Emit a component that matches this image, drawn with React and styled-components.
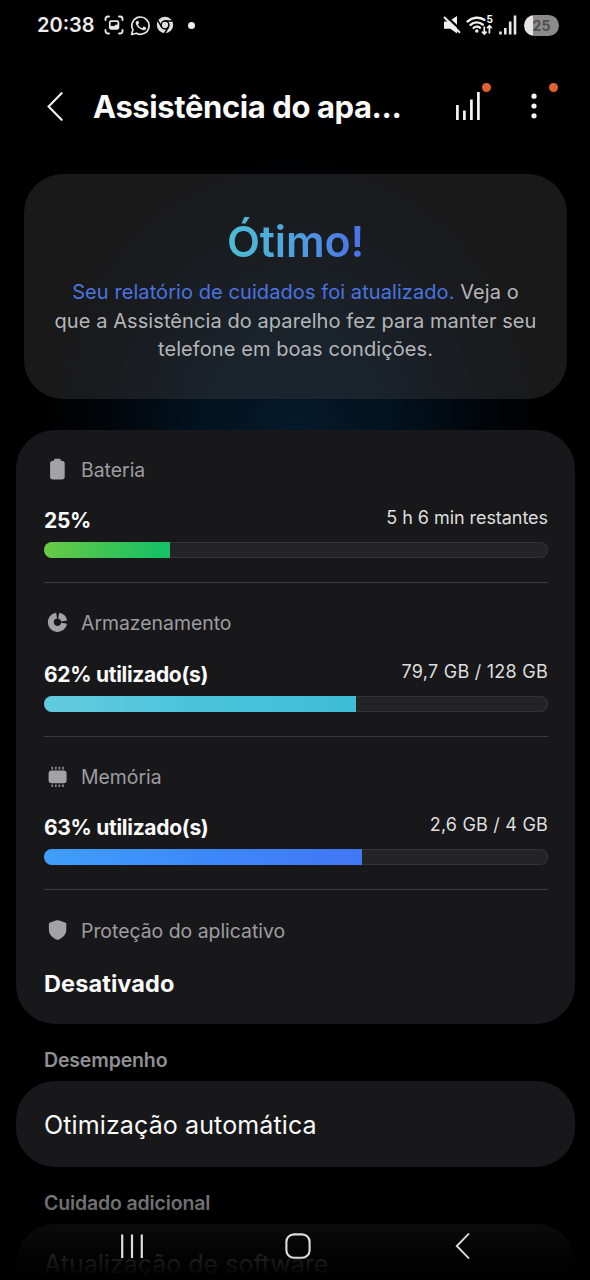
import React from 'react';
import styled, { createGlobalStyle } from 'styled-components';

const metrics = [
  {
    id: 'battery',
    label: 'Bateria',
    value: '25%',
    detail: '5 h 6 min restantes',
    tracking: '-0.05px',
    percent: 25,
    fill: 'linear-gradient(100deg, #6acb45 0%, #3cc455 50%, #12c169 100%)',
  },
  {
    id: 'storage',
    label: 'Armazenamento',
    value: '62% utilizado(s)',
    detail: '79,7 GB / 128 GB',
    tracking: '0.25px',
    percent: 62,
    fill: 'linear-gradient(90deg, #62cbe0, #4ac3da 50%, #3fbdd6)',
  },
  {
    id: 'memory',
    label: 'Memória',
    value: '63% utilizado(s)',
    detail: '2,6 GB / 4 GB',
    tracking: '0.2px',
    percent: 63,
    fill: 'linear-gradient(90deg, #3f9ffa, #3d86fb 55%, #4277f5)',
  },
];

const BatteryIcon = () => (
  <svg width="26" height="26" viewBox="0 0 26 26" fill="#a3a3a7">
    <path d="M10 3.300c0-.9.6-1.500 1.500-1.500h3.800c.9 0 1.500.6 1.500 1.500v.5h1.200c1.600 0 2.700 1.100 2.700 2.700v13.300c0 1.700-1.100 2.800-2.700 2.800H8.800c-1.600 0-2.700-1.100-2.700-2.800V6.500c0-1.600 1.100-2.700 2.700-2.700H10z" />
  </svg>
);

const StorageIcon = () => (
  <svg width="26" height="26" viewBox="0 0 26 26" fill="none" stroke="#a3a3a7" strokeWidth="6">
    <path d="M12.600 5.600a6.700 6.700 0 1 0 7.500 7.700" />
    <path d="M14.700 5.600a6.700 6.700 0 0 1 5.400 5.500" />
  </svg>
);

const MemoryIcon = () => (
  <svg width="26" height="26" viewBox="0 0 26 26" fill="#a3a3a7">
    <rect x="4.600" y="6.600" width="18" height="12.600" rx="3" />
    <path
      d="M8.200 2.800v2.600M11.800 2.800v2.600M15.400 2.800v2.600M19 2.800v2.600M8.200 20.400V23M11.800 20.400V23M15.400 20.400V23M19 20.400V23"
      stroke="#8a8a8e"
      strokeWidth="1.700"
    />
  </svg>
);

const ShieldIcon = () => (
  <svg width="26" height="26" viewBox="0 0 26 26" fill="#a3a3a7">
    <path d="M12.700 2.300a2.600 2.600 0 0 1 1.800 0l6.500 2.100c.8.300 1.300.8 1.300 1.600v5.500c0 5-3.300 8.100-7.400 10a3 3 0 0 1-2.600 0c-4.100-1.900-7.400-5-7.400-10V6c0-.8.5-1.300 1.300-1.600z" />
  </svg>
);

const metricIcons = {
  battery: <BatteryIcon />,
  storage: <StorageIcon />,
  memory: <MemoryIcon />,
};

const CaptureIcon = () => (
  <svg width="20" height="20" viewBox="0 0 20 20" fill="none" stroke="#e6e6e6" strokeWidth="1.900" strokeLinecap="round">
    <path d="M1.500 5V4a2.500 2.500 0 0 1 2.500-2.500h1M15 1.500h1A2.500 2.500 0 0 1 18.500 4v1M18.500 15v1a2.500 2.500 0 0 1-2.500 2.500h-1M5 18.500H4A2.500 2.500 0 0 1 1.500 16v-1" />
    <rect x="5.800" y="6.200" width="8.600" height="7.600" rx="1.200" strokeWidth="1.800" />
    <path d="M6 13.500V11.600l2-.9 2 .6 2-1.900 2.400.4v3.700z" fill="#e6e6e6" stroke="none" />
  </svg>
);

const WhatsappIcon = () => (
  <svg width="21" height="21" viewBox="0 0 21 21" fill="none" stroke="#e6e6e6" strokeWidth="1.700" strokeLinejoin="round">
    <path d="M1.600 19.500l1.300-4.800a8.600 8.600 0 1 1 3.500 3.500z" />
    <path
      d="M7.600 5.700c.4 0 .6.1.8.6l.6 1.500c.1.300 0 .6-.8 1.500-.2.200-.1.400 0 .6.9 1.500 2 2.400 3.600 3.100.3.100.5.100.7-.1l.9-1.100c.2-.3.400-.3.700-.2l1.700.8c.4.200.5.300.4.900-.2 1.200-1.400 2-2.500 1.900-3.700-.4-7.400-3.800-8-6.900-.2-1.200.9-2.600 1.900-2.600z"
      fill="#e6e6e6"
      stroke="none"
    />
  </svg>
);

const ChromeIcon = () => (
  <svg width="18" height="18" viewBox="0 0 18 18">
    <circle cx="9" cy="9" r="8.200" fill="#dedede" />
    <circle cx="9" cy="9" r="3.900" fill="#dedede" stroke="#000" strokeWidth="1.500" />
    <path d="M9 5.100h7.600M5.600 11L1.800 4.400M12.400 11L8.600 17.500" stroke="#000" strokeWidth="1.500" />
  </svg>
);

const MuteIcon = () => (
  <svg width="18" height="20" viewBox="0 0 18 20">
    <path d="M1 6.400h4.600L14 1v17.600l-6.600-4.900H1z" fill="#efefef" />
    <path d="M2.800 .6L19 16.200" stroke="#000" strokeWidth="2.200" />
    <path d="M1 2L17 17.700" stroke="#efefef" strokeWidth="2" />
  </svg>
);

const WifiIcon = () => (
  <svg width="28" height="22" viewBox="0 0 28 22" fill="none" stroke="#efefef" strokeLinecap="round">
    <path d="M1.700 7.400a13.500 13.500 0 0 1 16.600-1.600" strokeWidth="2.500" />
    <path d="M4.600 10.900a9 9 0 0 1 12.200-.3" strokeWidth="2.400" />
    <path d="M7.500 14a5 5 0 0 1 6.600-.1" strokeWidth="2.200" />
    <circle cx="10.800" cy="17" r="1.700" fill="#efefef" stroke="none" />
    <path d="M18.300 12.500v7M16 17.600l2.300 2.400 2.300-2.400M23.400 19.500v-7M21.100 14.200l2.300-2.400 2.300 2.400" strokeWidth="1.700" strokeLinecap="butt" />
  </svg>
);

const SignalIcon = () => (
  <svg width="18" height="22" viewBox="0 0 18 22" stroke="#e8e8e8" strokeWidth="2.600">
    <path d="M1.500 17.500V20.500M6.300 14V20.500M11.200 7.500V20.500M16 1.500V20.500" />
  </svg>
);

const BackIcon = ({ width, height, stroke }) => (
  <svg width={width} height={height} viewBox="0 0 16 29" fill="none" stroke={stroke} strokeWidth="2.100" strokeLinecap="round">
    <path d="M14.600 1.200L1.600 14.500l13 13.300" />
  </svg>
);

const ReportIcon = () => (
  <svg width="26" height="30" viewBox="0 0 26 30" stroke="#f4f4f4" strokeWidth="2.700">
    <path d="M2.400 14V29M9.400 19.500V29M16.400 8.500V29M23.400 1V29" />
  </svg>
);

const MoreIcon = () => (
  <svg width="6" height="26" viewBox="0 0 6 26" fill="#f4f4f4">
    <circle cx="3" cy="3.200" r="2.600" />
    <circle cx="3" cy="13" r="2.600" />
    <circle cx="3" cy="22.800" r="2.600" />
  </svg>
);

const App = () => {
  return (
    <Screen>
      <GlobalStyle />
      <StatusBar>
        <StatusGroup>
          <Clock>20:38</Clock>
          <CaptureIcon />
          <WhatsappIcon />
          <ChromeIcon />
          <StatusDot />
        </StatusGroup>
        <StatusGroup $right>
          <MuteIcon />
          <Wifi>
            <WifiIcon />
            <WifiBand>5</WifiBand>
          </Wifi>
          <SignalIcon />
          <BatteryPill>25</BatteryPill>
        </StatusGroup>
      </StatusBar>

      <Header>
        <IconButton>
          <BackIcon width="16" height="29" stroke="#f4f4f4" />
        </IconButton>
        <Title>Assistência do apa...</Title>
        <Actions>
          <IconButton>
            <ReportIcon />
            <Badge $x="27px" $y="-8px" />
          </IconButton>
          <IconButton>
            <MoreIcon />
            <Badge $x="18px" $y="-10px" />
          </IconButton>
        </Actions>
      </Header>

      <Content>
        <Hero>
          <HeroTitle>Ótimo!</HeroTitle>
          <HeroText>
            <HeroLink>Seu relatório de cuidados foi atualizado.</HeroLink> Veja o<br />
            que a Assistência do aparelho fez para manter seu<br />
            telefone em boas condições.
          </HeroText>
        </Hero>

        <Card>
          {metrics.map((m) => (
            <Metric key={m.id}>
              <Label>
                {metricIcons[m.id]}
                {m.label}
              </Label>
              <Values>
                <Value>{m.value}</Value>
                <Detail $tracking={m.tracking}>{m.detail}</Detail>
              </Values>
              <Track>
                <Fill $fill={m.fill} style={{ width: `${m.percent}%` }} />
              </Track>
            </Metric>
          ))}
          <Protection>
            <Label>
              <ShieldIcon />
              Proteção do aplicativo
            </Label>
            <ProtectionState>Desativado</ProtectionState>
          </Protection>
        </Card>

        <SectionTitle>Desempenho</SectionTitle>
        <ListItem>Otimização automática</ListItem>
        <SectionTitle>Cuidado adicional</SectionTitle>
        <ListItem $last>Atualização de software</ListItem>
      </Content>

      <NavBar>
        <NavButton>
          <svg width="24" height="26" viewBox="0 0 24 26" stroke="#dcdcdc" strokeWidth="2.200">
            <path d="M2.200 1.500V25M12 1.500V25M21.800 1.500V25" />
          </svg>
        </NavButton>
        <NavButton>
          <svg width="26" height="26" viewBox="0 0 26 26" fill="none" stroke="#dcdcdc" strokeWidth="2.100">
            <rect x="1.400" y="1.400" width="23.200" height="23.400" rx="7.500" />
          </svg>
        </NavButton>
        <NavButton>
          <BackIcon width="15" height="26" stroke="#dcdcdc" />
        </NavButton>
      </NavBar>
    </Screen>
  );
};

const GlobalStyle = createGlobalStyle`
  * {
    box-sizing: border-box;
  }

  body {
    margin: 0;
    background: #000;
  }

  svg {
    display: block;
    flex-shrink: 0;
  }
`;

const Screen = styled.div`
  position: relative;
  width: 590px;
  height: 1280px;
  overflow: hidden;
  background: radial-gradient(ellipse 245px 270px at 295px 425px, #04192a 0%, #03121f 40%, #01060b 75%, #000 100%);
  color: #fff;
  font-family: Inter, 'Liberation Sans', sans-serif;
`;

const StatusBar = styled.div`
  display: flex;
  justify-content: space-between;
  align-items: center;
  height: 50px;
  padding: 0 31px 0 37px;
`;

const StatusGroup = styled.div`
  display: flex;
  align-items: center;
  gap: ${(props) => (props.$right ? '5px' : '5.500px')};
`;

const Clock = styled.span`
  width: 61.5px;
  font-size: 20px;
  font-weight: 600;
  color: #ececec;
`;

const StatusDot = styled.span`
  width: 7px;
  height: 7px;
  margin-left: 8px;
  border-radius: 50%;
  background: #efefef;
`;

const Wifi = styled.span`
  position: relative;
`;

const WifiBand = styled.span`
  position: absolute;
  top: 0;
  right: 1px;
  font-size: 10px;
  font-weight: 700;
  line-height: 10px;
`;

const BatteryPill = styled.span`
  display: flex;
  align-items: center;
  justify-content: center;
  width: 35px;
  height: 21px;
  margin-left: 2px;
  border-radius: 11px;
  background: linear-gradient(90deg, #e4e4e4 25%, #8b8b8b 25%);
  color: #4f4f4f;
  font-size: 14px;
  font-weight: 700;
`;

const Header = styled.header`
  display: flex;
  align-items: center;
  height: 112px;
  padding: 0 53px 0 47px;
`;

const IconButton = styled.button`
  position: relative;
  padding: 0;
  border: none;
  background: none;
  cursor: pointer;
`;

const Title = styled.h1`
  flex: 1;
  margin: 0 0 0 30px;
  padding-top: 2px;
  color: #fafafa;
  font-size: 31px;
  font-weight: 700;
  line-height: 40px;
  letter-spacing: -0.4px;
  white-space: nowrap;
`;

const Actions = styled.div`
  display: flex;
  align-items: center;
  gap: 50px;
`;

const Badge = styled.span`
  position: absolute;
  left: ${(props) => props.$x};
  top: ${(props) => props.$y};
  width: 9px;
  height: 9px;
  border-radius: 50%;
  background: #e0632f;
`;

const Content = styled.main`
  display: flex;
  flex-direction: column;
  padding: 12px 15px 0 16px;
`;

const Hero = styled.section`
  height: 225px;
  margin: 0 8px 31px;
  padding-top: 39px;
  border-radius: 39px;
  background: rgba(49, 49, 52, 0.5);
  text-align: center;
`;

const HeroTitle = styled.h2`
  width: fit-content;
  margin: 0 auto;
  background: linear-gradient(90deg, #4dbbd3 5%, #4f9fe0 50%, #4a74e8 95%);
  background-clip: text;
  color: transparent;
  font-size: 43px;
  font-weight: 600;
  line-height: 56px;
  letter-spacing: -0.2px;
`;

const HeroText = styled.p`
  margin: 9px 0 0;
  color: #b4b6ba;
  font-size: 20px;
  line-height: 28.5px;
  letter-spacing: 0.08px;
  white-space: nowrap;
`;

const HeroLink = styled.span`
  color: #4a74e0;
`;

const Card = styled.section`
  height: 594px;
  padding: 0 27px 0 28px;
  border-radius: 39px;
  background: #18181a;
`;

const Metric = styled.div`
  display: flex;
  flex-direction: column;
  margin-bottom: 0.7px;
  padding: 27.5px 0 24px;
  border-bottom: 1px solid #3a3a3c;
`;

const Label = styled.div`
  display: flex;
  align-items: center;
  gap: 11px;
  height: 24px;
  color: #9d9da1;
  font-size: 19.4px;
`;

const Values = styled.div`
  display: flex;
  justify-content: space-between;
  height: 26px;
  margin: 25.5px 0 9px;
  line-height: 27px;
`;

const Value = styled.span`
  color: #fafafa;
  font-size: 21px;
  font-weight: 700;
  letter-spacing: -0.3px;
`;

const Detail = styled.span`
  color: #dededf;
  font-size: 18px;
  line-height: 22px;
  letter-spacing: ${(props) => props.$tracking};
`;

const Track = styled.div`
  height: 16px;
  border-radius: 8px;
  background: #242426;
  box-shadow: inset 0 0 0 1px #343436;
  overflow: hidden;
`;

const Fill = styled.div`
  height: 100%;
  background: ${(props) => props.$fill};
`;

const Protection = styled.div`
  padding-top: 27.5px;
`;

const ProtectionState = styled.div`
  margin-top: 25.5px;
  color: #fafafa;
  font-size: 23.5px;
  font-weight: 700;
  line-height: 31px;
  letter-spacing: 0.1px;
`;

const SectionTitle = styled.h3`
  margin: 0;
  padding: 15px 28px 0;
  height: 57px;
  color: #8f8f92;
  font-size: 19.5px;
  font-weight: 600;
  line-height: 42px;
  letter-spacing: -0.15px;
`;

const ListItem = styled.div`
  display: flex;
  align-items: center;
  height: ${(props) => (props.$last ? '80px' : '86px')};
  padding: ${(props) => (props.$last ? '0 28px' : '2px 28px 0')};
  border-radius: 39px;
  background: #18181a;
  color: #fafafa;
  font-size: 25px;
  letter-spacing: ${(props) => (props.$last ? '0' : '0.12px')};
`;

const NavBar = styled.nav`
  position: absolute;
  left: 0;
  right: 0;
  bottom: 0;
  display: flex;
  align-items: flex-start;
  justify-content: space-between;
  height: 100px;
  padding: 53px 120px 0 120px;
  background: linear-gradient(180deg, rgba(0, 0, 0, 0) 0%, rgba(0, 0, 0, 0.25) 28%, rgba(0, 0, 0, 0.52) 44%, rgba(0, 0, 0, 0.86) 72%, rgba(0, 0, 0, 0.92) 85%, #000 97%);
`;

const NavButton = styled.button`
  padding: 0;
  border: none;
  background: none;
  cursor: pointer;

  &:nth-child(2) {
    margin-right: 4px;
  }
`;

export default App;
